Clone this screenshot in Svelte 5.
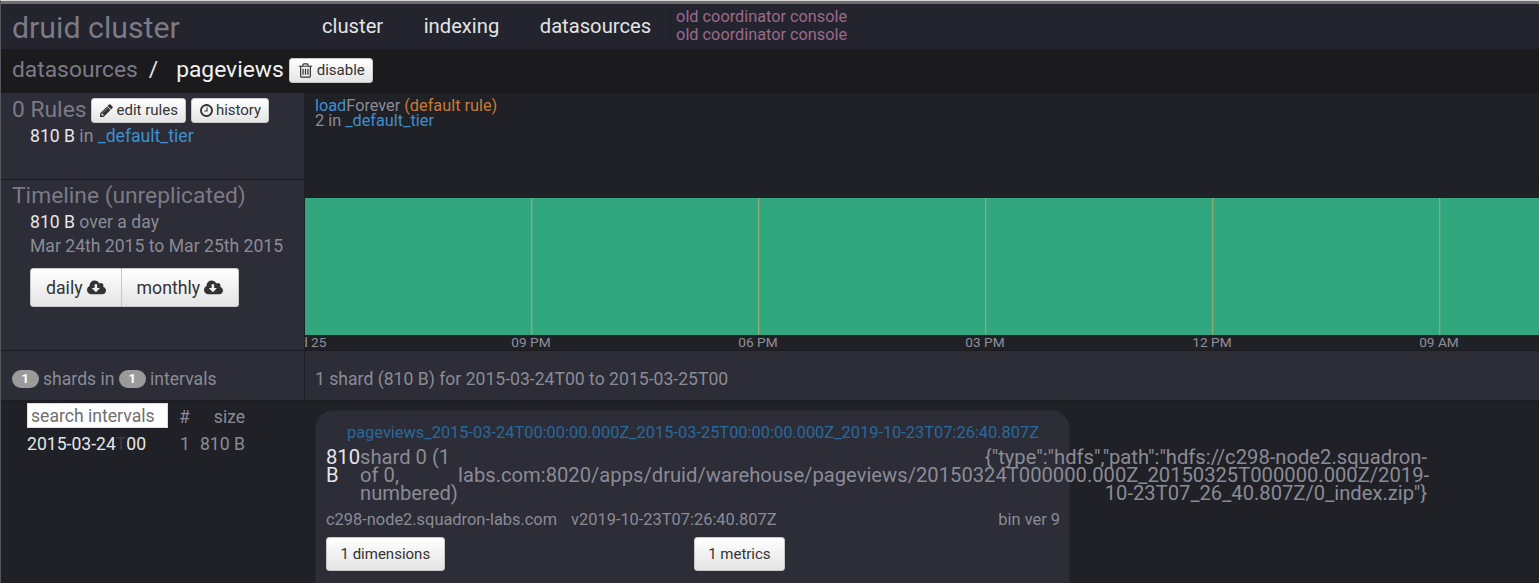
<script lang="ts">
  const ticks = [
    { x: 226, label: '09 PM' },
    { x: 453, label: '06 PM' },
    { x: 680, label: '03 PM' },
    { x: 907, label: '12 PM' },
    { x: 1134, label: '09 AM' }
  ];
</script>

{#snippet trash()}
  <svg class="ic" viewBox="0 0 1792 1792"><path d="M704 736v576q0 14-9 23t-23 9h-64q-14 0-23-9t-9-23v-576q0-14 9-23t23-9h64q14 0 23 9t9 23zm256 0v576q0 14-9 23t-23 9h-64q-14 0-23-9t-9-23v-576q0-14 9-23t23-9h64q14 0 23 9t9 23zm256 0v576q0 14-9 23t-23 9h-64q-14 0-23-9t-9-23v-576q0-14 9-23t23-9h64q14 0 23 9t9 23zm128 724v-948h-896v948q0 22 7 40.500t14.500 27 10.500 8.500h832q3 0 10.500-8.500t14.500-27 7-40.500zm-672-1076h448l-48-117q-7-9-17-11h-317q-10 2-17 11zm928 32v64q0 14-9 23t-23 9h-96v948q0 83-47 143.500t-113 60.500h-832q-66 0-113-58.500t-47-141.500v-952h-96q-14 0-23-9t-9-23v-64q0-14 9-23t23-9h309l70-167q15-37 54-63t79-26h320q40 0 79 26t54 63l70 167h309q14 0 23 9t9 23z"/></svg>
{/snippet}
{#snippet pencil()}
  <svg class="ic" viewBox="0 0 1792 1792"><path d="M491 1536l91-91-235-235-91 91v107h128v128h107zm523-928q0-22-22-22-10 0-17 7l-542 542q-7 7-7 17 0 22 22 22 10 0 17-7l542-542q7-7 7-17zm-54-192l416 416-832 832h-416v-416zm683 96q0 53-37 91l-166 166-416-416 166-165q36-38 91-38 53 0 90 38l235 234q37 39 37 90z"/></svg>
{/snippet}
{#snippet clock()}
  <svg class="ic" viewBox="0 0 1792 1792"><path d="M1024 544v448q0 14-9 23t-23 9h-320q-14 0-23-9t-9-23v-64q0-14 9-23t23-9h224v-352q0-14 9-23t23-9h64q14 0 23 9t9 23zm416 352q0-148-73-273t-198-198-273-73-273 73-198 198-73 273 73 273 198 198 273 73 273-73 198-198 73-273zm224 0q0 209-103 385.500t-279.500 279.500-385.500 103-385.500-103-279.500-279.500-103-385.500 103-385.500 279.500-279.500 385.500-103 385.500 103 279.500 279.500 103 385.500z"/></svg>
{/snippet}
{#snippet cloud()}
  <svg class="ic cloud" viewBox="0 0 1920 1792"><path d="M1280 928q0-14-9-23t-23-9h-224v-352q0-13-9.500-22.500t-22.500-9.500h-192q-13 0-22.500 9.500t-9.500 22.500v352h-224q-13 0-22.500 9.500t-9.500 22.500q0 14 9 23l352 352q9 9 23 9t23-9l351-352q10-12 10-24zm640 224q0 159-112.500 271.500t-271.500 112.500h-1088q-185 0-316.500-131.500t-131.500-316.500q0-130 70-240t188-165q-2-30-2-43 0-212 150-362t362-150q156 0 285.500 87t188.500 231q71-62 166-62 106 0 181 75t75 181q0 76-41 138 130 31 213.500 135.500t83.500 238.500z"/></svg>
{/snippet}

<div class="page">
  <header class="top">
    <div class="brand">druid cluster</div>
    <nav class="nav">
      <span>cluster</span>
      <span>indexing</span>
      <span>datasources</span>
    </nav>
    <div class="old">
      <div>old coordinator console</div>
      <div>old coordinator console</div>
    </div>
  </header>

  <div class="crumbs">
    <span class="crumb-link">datasources</span>
    <span class="slash">/</span>
    <span class="crumb-cur">pageviews</span>
    <button class="btn small disable">{@render trash()}disable</button>
  </div>

  <section class="row rules">
    <div class="side">
      <div class="heading">
        <span class="h-text">0 Rules</span>
        <button class="btn small">{@render pencil()}edit rules</button>
        <button class="btn small">{@render clock()}history</button>
      </div>
      <div class="line first"><b>810 B</b> in <a href="#tier">_default_tier</a></div>
    </div>
    <div class="main rule-text">
      <div><a href="#load">load</a>Forever <span class="orange">(default rule)</span></div>
      <div>2 in <a href="#tier">_default_tier</a></div>
    </div>
  </section>

  <section class="row timeline">
    <div class="side">
      <div class="h-text">Timeline (unreplicated)</div>
      <div class="line tl1"><b>810 B</b> over a day</div>
      <div class="line tl2">Mar 24th 2015 to Mar 25th 2015</div>
      <div class="group">
        <button class="btn big">daily {@render cloud()}</button>
        <button class="btn big">monthly {@render cloud()}</button>
      </div>
    </div>
    <div class="main chart">
      <div class="bars">
        {#each ticks as t}
          <i class="tick" style="left:{t.x}px"></i>
        {/each}
      </div>
      <div class="axis">
        <span class="axis-label cut">d 25</span>
        {#each ticks as t}
          <span class="axis-label center" style="left:{t.x}px">{t.label}</span>
        {/each}
      </div>
    </div>
  </section>

  <section class="row summary">
    <div class="side sum-side">
      <span class="badge">1</span> shards in <span class="badge">1</span> intervals
    </div>
    <div class="main sum-main">1 shard (810 B) for 2015-03-24T00 to 2015-03-25T00</div>
  </section>

  <section class="row bottom">
    <div class="side list">
      <div class="list-head">
        <div class="search">search intervals</div>
        <span class="hash">#</span>
        <span class="size">size</span>
      </div>
      <div class="list-row">
        <span class="date">2015-03-24<span class="t">T</span>00</span>
        <span class="n">1</span>
        <span class="sz">810 B</span>
      </div>
    </div>
    <div class="main seg-area">
      <div class="card">
        <div class="seg-id">pageviews_2015-03-24T00:00:00.000Z_2015-03-25T00:00:00.000Z_2019-10-23T07:26:40.807Z</div>
        <div class="seg-info">
          <b class="seg-size">810 B</b>
          <div class="seg-shard">shard 0 (1 of 0, numbered)</div>
          <div class="seg-path">{'{'}"type":"hdfs","path":"hdfs://c298-node2.squadron-<br />labs.com:8020/apps/druid/warehouse/pageviews/20150324T000000.000Z_20150325T000000.000Z/2019-<br />10-23T07_26_40.807Z/0_index.zip"{'}'}</div>
        </div>
        <div class="seg-meta">
          <span>c298-node2.squadron-labs.com</span>
          <span class="ver">v2019-10-23T07:26:40.807Z</span>
          <span class="bin">bin ver 9</span>
        </div>
        <div class="seg-btns">
          <button class="btn mid">1 dimensions</button>
          <button class="btn mid metrics">1 metrics</button>
        </div>
      </div>
    </div>
  </section>
</div>

<style>
  :global(body) {
    margin: 0;
    background: #202127;
    overflow: hidden;
  }

  .page {
    height: 583px;
    overflow: hidden;
    box-sizing: border-box;
    border-top: 1px solid #d8d8d8;
    border-left: 1px solid #55565c;
    background: #202127;
    font-family: Roboto, sans-serif;
    font-size: 17.6px;
    color: #8b8b96;
    display: flex;
    flex-direction: column;
  }

  .page::before {
    content: '';
    display: block;
    flex-shrink: 0;
    height: 3px;
    background: #6e6e6e;
  }

  a {
    color: #3f8fd0;
    text-decoration: none;
  }

  b {
    font-weight: 400;
    color: #e6e6e6;
  }

  .top {
    height: 45px;
    flex-shrink: 0;
    background: #23242d;
    display: flex;
    align-items: center;
  }

  .brand {
    width: 310px;
    padding: 2px 0 0 11px;
    box-sizing: border-box;
    font-size: 30.3px;
    color: #7b7a85;
  }

  .nav {
    display: flex;
    gap: 40.5px;
    font-size: 20.2px;
    color: #e2e4e6;
    padding-left: 11px;
    margin-bottom: 2px;
  }

  .old {
    margin-left: 19px;
    padding-left: 5px;
    font-size: 16.3px;
    line-height: 18px;
    color: #9c6a8c;
    margin-bottom: 2px;
    border-left: 1px solid #1f2027;
  }

  .crumbs {
    height: 44px;
    box-sizing: border-box;
    flex-shrink: 0;
    background: #1b1b1e;
    display: flex;
    align-items: center;
    padding: 0 0 4px 11px;
    font-size: 22.8px;
  }

  .crumb-link {
    color: #7b7a85;
  }

  .slash {
    color: #e6e6e6;
    margin: 0 18px 0 11px;
  }

  .crumb-cur {
    color: #f2f2f2;
  }

  .btn {
    font-family: Roboto, sans-serif;
    background: linear-gradient(#ffffff, #e4e4e4);
    border: 1px solid #c8c8c8;
    border-radius: 3px;
    color: #333;
    padding: 0;
    display: inline-flex;
    align-items: center;
    justify-content: center;
  }

  .ic {
    fill: #333;
    width: 15px;
    height: 15px;
    flex-shrink: 0;
  }

  .small {
    height: 25px;
    font-size: 15px;
    padding: 0 7px;
    gap: 2px;
  }

  .disable {
    margin-left: 5px;
    margin-top: 2px;
    gap: 3px;
  }

  .disable .ic {
    width: 17px;
    height: 17px;
  }

  .row {
    display: flex;
    flex-shrink: 0;
    border-bottom: 1px solid #1b1b20;
  }

  .side {
    width: 304px;
    box-sizing: border-box;
    background: #2c2d37;
    border-right: 1px solid #1f2027;
    padding-left: 11px;
    flex-shrink: 0;
  }

  .main {
    flex: 1;
    min-width: 0;
    background: #202127;
  }

  .rules {
    height: 86px;
  }

  .heading {
    display: flex;
    align-items: center;
    gap: 5px;
    height: 34px;
  }

  .h-text {
    font-size: 22.8px;
    color: #7b7a85;
    line-height: 30px;
  }

  .line {
    padding-left: 18px;
    line-height: 20px;
  }

  .first {
    margin-top: -1px;
  }

  .rule-text {
    padding: 5px 0 0 10px;
    font-size: 16.3px;
    line-height: 15px;
  }

  .orange {
    color: #c87a35;
  }

  .timeline {
    height: 170px;
  }

  .timeline .h-text {
    margin-top: 1px;
  }

  .tl1 {
    margin-top: 1px;
  }

  .tl2 {
    margin-top: 4px;
  }

  .group {
    display: flex;
    margin: 12px 0 0 18px;
  }

  .big {
    height: 39px;
    font-size: 17.7px;
    gap: 4px;
    padding: 0 15px;
  }

  .big:first-child {
    border-radius: 3px 0 0 3px;
    border-right: 1px solid #c8c8c8;
  }

  .big:last-child {
    border-radius: 0 3px 3px 0;
    border-left: 0;
  }

  .cloud {
    width: 19px;
    height: 18px;
  }

  .chart {
    padding-top: 18px;
  }

  .bars {
    height: 137px;
    background: #31a67f;
    position: relative;
  }

  .tick {
    position: absolute;
    top: 0;
    bottom: 0;
    width: 1px;
    background: #93a96f;
    box-shadow: 1px 0 0 #52a87d;
  }

  .axis {
    position: relative;
    height: 15px;
    overflow: hidden;
  }

  .axis-label {
    position: absolute;
    top: 0;
    font-size: 13.7px;
    line-height: 15px;
    color: #8f8f99;
    white-space: nowrap;
  }

  .cut {
    left: -5px;
  }

  .center {
    transform: translateX(-50%);
  }

  .summary {
    height: 49px;
    background: #2c2d37;
  }

  .sum-side {
    display: flex;
    align-items: center;
    gap: 4.5px;
    padding-top: 6px;
  }

  .badge {
    background: #9a9a9a;
    color: #fff;
    border-radius: 10px;
    width: 26.5px;
    height: 18px;
    font-size: 13px;
    font-weight: 700;
    display: inline-flex;
    align-items: center;
    justify-content: center;
  }

  .sum-main {
    background: #2c2d37;
    display: flex;
    align-items: center;
    padding: 6px 0 0 10px;
  }

  .bottom {
    flex: 1;
    min-height: 0;
    border: 0;
  }

  .list {
    background: #202127;
    padding-left: 26px;
  }

  .list-head {
    display: flex;
    align-items: center;
    margin-top: 2px;
    height: 25px;
  }

  .search {
    width: 141px;
    height: 25px;
    box-sizing: border-box;
    padding-left: 3px;
    background: #fff;
    color: #6f6f6f;
    line-height: 25px;
    border: 1px solid #ddd;
  }

  .hash,
  .size {
    padding-top: 2px;
  }

  .hash {
    margin-left: 11px;
  }

  .size {
    margin-left: 24px;
  }

  .list-row {
    display: flex;
    margin-top: 5px;
    line-height: 22px;
  }

  .date {
    width: 153px;
    color: #e6e6e6;
  }

  .t {
    color: #3a3b44;
  }

  .sz {
    margin-left: 10px;
  }

  .seg-area {
    padding: 9px 0 0 10px;
  }

  .card {
    width: 755px;
    height: 200px;
    box-sizing: border-box;
    background: #2c2d37;
    border-radius: 18px;
    border: 1px solid #26272f;
    padding: 13px 10px 0;
  }

  .seg-id {
    color: #28699e;
    padding-left: 21px;
    font-size: 16.4px;
    line-height: 18px;
  }

  .seg-info {
    display: flex;
    align-items: flex-start;
    margin-top: 6px;
    font-size: 20.2px;
    line-height: 18px;
  }

  .seg-size {
    width: 34px;
    flex-shrink: 0;
  }

  .seg-shard {
    width: 98px;
    flex-shrink: 0;
  }

  .seg-path {
    flex-shrink: 0;
    width: 969px;
    white-space: nowrap;
    text-align: right;
  }

  .seg-meta {
    display: flex;
    font-size: 16.4px;
    line-height: 18px;
    margin-top: 9px;
  }

  .ver {
    margin-left: 14px;
  }

  .bin {
    margin-left: auto;
    margin-right: -1px;
  }

  .seg-btns {
    display: flex;
    margin-top: 8px;
  }

  .mid {
    height: 34px;
    font-size: 15px;
    padding: 0 13.5px;
  }

  .metrics {
    margin-left: 249px;
  }
</style>
